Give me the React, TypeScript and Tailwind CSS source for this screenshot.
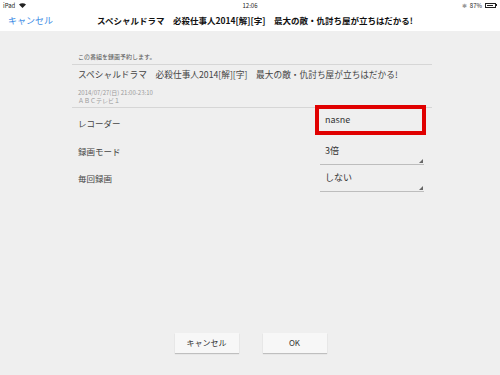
const font = { fontFamily: '"Noto Sans CJK JP", "Liberation Sans", sans-serif' };

function SelectField({ value }: { value: string }) {
  return (
    <div className="relative ml-[5px] w-[104px] h-[27px] border-b border-[#bdbdbd] flex items-center pl-[5px]">
      <span className="text-[9px] text-[#333]">{value}</span>
      <span className="absolute right-[1px] bottom-[1px] w-0 h-0 border-l-[4px] border-l-transparent border-b-[4px] border-b-[#666]" />
    </div>
  );
}

export default function App() {
  return (
    <div className="w-[500px] h-[375px] bg-[#efefef] flex flex-col overflow-hidden" style={font}>
      <div className="bg-white">
        <div className="h-[10px] relative flex items-center px-[3px] text-[6px] text-[#222]">
          <span>iPad</span>
          <svg className="ml-[4px]" width="7" height="5" viewBox="0 0 7 5">
            <path d="M0 1.6 A5 5 0 0 1 7 1.6 L3.5 5 Z" fill="#222" />
          </svg>
          <span className="absolute left-1/2 -translate-x-1/2">12:06</span>
          <div className="ml-auto flex items-center gap-[3px]">
            <span className="text-[#999]">✱</span>
            <span>87%</span>
            <div className="flex items-center">
              <div className="w-[11px] h-[5px] border border-[#222] p-[1px]">
                <div className="w-[80%] h-full bg-[#222]" />
              </div>
              <div className="w-[1px] h-[2px] bg-[#222]" />
            </div>
          </div>
        </div>
        <div className="h-[21px] relative flex items-center">
          <span className="ml-[8px] text-[9px] text-[#3b8be5]">キャンセル</span>
          <span className="absolute left-[255px] -translate-x-1/2 whitespace-nowrap text-[8.5px] font-bold text-[#111]">
            スペシャルドラマ　必殺仕事人2014[解][字]　最大の敵・仇討ち屋が立ちはだかる!
          </span>
        </div>
      </div>

      <div className="ml-[72px] w-[360px] mt-[21px]">
        <div className="pl-[6px] pb-[3px] text-[6px] text-[#555]">この番組を録画予約します。</div>
        <div className="border-t border-[#d6d6d6] pl-[6px] pt-[3px] pb-[2px]">
          <div className="text-[8.7px] text-[#444] whitespace-nowrap leading-[14px]">
            スペシャルドラマ　必殺仕事人2014[解][字]　最大の敵・仇討ち屋が立ちはだかる!
          </div>
          <div className="mt-[7px] text-[6px] leading-[8px] text-[#9a9a9a]">
            <div>2014/07/27(日) 21:00-23:10</div>
            <div>ＡＢＣテレビ１</div>
          </div>
        </div>
        <div className="border-t border-[#d6d6d6]">
          <div className="flex items-center h-[30px]">
            <span className="pl-[6px] w-[243px] text-[8.5px] text-[#444]">レコーダー</span>
            <div className="self-start -mt-[3px] w-[111px] h-[30px] border-[4px] border-[#e00000] flex items-center pl-[6px] bg-[#efefef]">
              <span className="text-[9px] text-[#333]">nasne</span>
            </div>
          </div>
          <div className="flex items-center h-[27px]">
            <span className="pl-[6px] w-[243px] text-[8.5px] text-[#444]">録画モード</span>
            <SelectField value="3倍" />
          </div>
          <div className="flex items-center h-[27px]">
            <span className="pl-[6px] w-[243px] text-[8.5px] text-[#444]">毎回録画</span>
            <SelectField value="しない" />
          </div>
        </div>
      </div>

      <div className="mt-auto mb-[22px] flex justify-center gap-[24px] pl-[1px]">
        <button className="w-[64px] h-[20px] bg-[#f7f7f7] shadow-[0_1px_1px_rgba(0,0,0,0.2)] text-[8px] text-[#333]">キャンセル</button>
        <button className="w-[64px] h-[20px] bg-[#f7f7f7] shadow-[0_1px_1px_rgba(0,0,0,0.2)] text-[8px] text-[#333]">OK</button>
      </div>
    </div>
  );
}
